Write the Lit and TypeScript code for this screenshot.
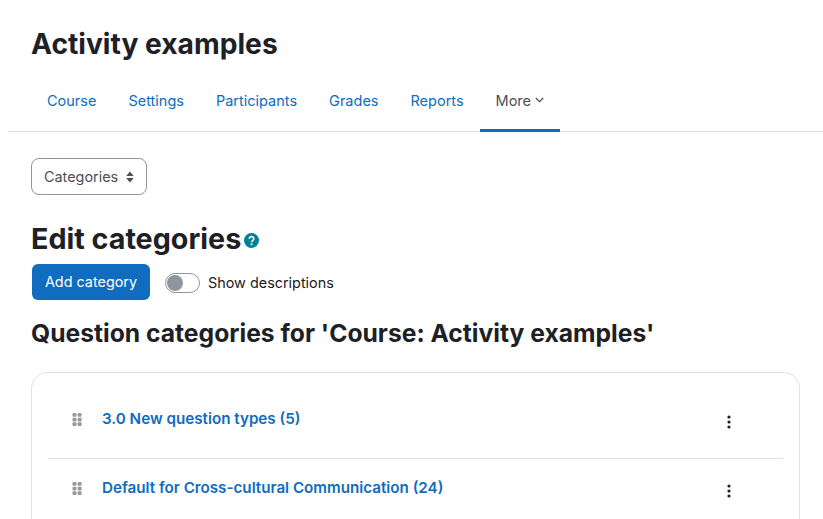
import { LitElement, html, css, svg } from "lit";
import { customElement } from "lit/decorators.js";

const tabs = ["Course", "Settings", "Participants", "Grades", "Reports"];
const rows = [
  { label: "3.0 New question types (5)", cls: "row first" },
  { label: "Default for Cross-cultural Communication (24)", cls: "row" },
];

const grip = svg`<svg class="grip" width="10" height="13" viewBox="0 0 10 13" fill="#999">
  <rect x="0.5" y="0" width="4" height="3.7" rx="1"/><rect x="5.6" y="0" width="4" height="3.7" rx="1"/>
  <rect x="0.5" y="4.7" width="4" height="3.7" rx="1"/><rect x="5.6" y="4.7" width="4" height="3.7" rx="1"/>
  <rect x="0.5" y="9.3" width="4" height="3.7" rx="1"/><rect x="5.6" y="9.3" width="4" height="3.7" rx="1"/>
</svg>`;

const kebab = svg`<svg class="kebab" width="4" height="14" viewBox="0 0 4 14" fill="#1d2125">
  <circle cx="2" cy="2" r="1.6"/><circle cx="2" cy="7" r="1.6"/><circle cx="2" cy="12" r="1.6"/>
</svg>`;

@customElement("app-root")
export class AppRoot extends LitElement {
  static styles = css`
    :host {
      display: block;
      width: 823px;
      height: 519px;
      overflow: hidden;
      background: #fff;
      color: #1d2125;
      font-family: Inter, "Liberation Sans", sans-serif;
      font-size: 14.4px;
    }
    .page { padding: 25px 23px 0 31px; }
    h1 {
      margin: 0;
      font-size: 28.2px;
      line-height: 38px;
      font-weight: 700;
    }
    nav {
      display: flex;
      margin: 7px -23px 0 -23px;
      height: 61px;
      border-bottom: 1px solid #dee2e6;
      padding-left: 23px;
      font-size: 14.5px;
    }
    nav a {
      display: flex;
      align-items: center;
      gap: 4px;
      height: 62px;
      box-sizing: border-box;
      padding: 1px 16px 0;
      color: #0f6cbf;
      border-bottom: 3px solid transparent;
    }
    nav a.active { color: #495057; border-bottom-color: #0f6cbf; }
    .select {
      display: inline-flex;
      align-items: center;
      gap: 8px;
      box-sizing: border-box;
      height: 37px;
      width: 116px;
      margin-top: 26px;
      padding: 0 12px;
      border: 1px solid #8f959e;
      border-radius: 8px;
      color: #495057;
    }
    .heading {
      display: flex;
      align-items: center;
      gap: 3px;
      margin-top: 25px;
      height: 38px;
    }
    h2 {
      margin: 0;
      font-size: 28.7px;
      line-height: 38px;
      font-weight: 700;
    }
    .help { margin-top: 2px; }
    .actions {
      display: flex;
      align-items: center;
      margin-top: 6px;
      margin-left: 1px;
    }
    .btn {
      display: flex;
      align-items: center;
      box-sizing: border-box;
      height: 36px;
      width: 118px;
      padding-bottom: 1px;
      justify-content: center;
      background: #0f6cbf;
      color: #fff;
      border-radius: 6px;
    }
    .toggle {
      box-sizing: border-box;
      width: 35px;
      height: 20px;
      margin: 2px 0 0 15px;
      border: 1px solid #8f959e;
      border-radius: 10px;
      padding: 1px;
    }
    .toggle span {
      display: block;
      width: 16px;
      height: 16px;
      border-radius: 50%;
      background: #8f959e;
    }
    .toggle-label { margin: 1px 0 0 8px; color: #1d2125; }
    h3 {
      margin: 19px 0 0;
      font-size: 24.66px;
      line-height: 28px;
      font-weight: 700;
    }
    .card {
      margin-top: 25px;
      height: 200px;
      box-sizing: border-box;
      width: 769px;
      padding: 0 16px;
      border: 1px solid #dee2e6;
      border-radius: 16px;
    }
    .row {
      display: flex;
      align-items: flex-start;
      box-sizing: border-box;
      height: 69px;
      padding: 0 52px 0 24px;
      border-bottom: 1px solid #dee2e6;
    }
    .row.first { height: 86px; padding-top: 17px; }
    .grip { flex: none; margin-top: 23px; }
    .kebab { flex: none; margin-top: 25px; }
    .row a {
      flex: 1;
      margin: 18px 0 0 20px;
      color: #0f6cbf;
      font-size: 15.2px;
      line-height: 22px;
      font-weight: 600;
    }
  `;

  render() {
    return html`
      <div class="page">
        <h1>Activity examples</h1>
        <nav>
          ${tabs.map((t) => html`<a>${t}</a>`)}
          <a class="active">More
            <svg width="9" height="6" viewBox="0 0 9 6" fill="none" stroke="#495057" stroke-width="1.2"><path d="M.8 1l3.7 3.7L8.2 1"/></svg>
          </a>
        </nav>
        <div class="select">
          <span>Categories</span>
          <svg width="8" height="12" viewBox="0 0 8 12" fill="#495057"><path d="M4 .5L7.8 5H.2zM4 11.5L.2 7h7.6z"/></svg>
        </div>
        <div class="heading">
          <h2>Edit categories</h2>
          <svg class="help" width="15" height="15" viewBox="0 0 15 15">
            <circle cx="7.5" cy="7.5" r="7.5" fill="#008196"/>
            <path d="M5.3 5.8a2.2 2.2 0 1 1 3.4 1.8c-.8.5-1.1.9-1.1 1.6" fill="none" stroke="#fff" stroke-width="1.7"/>
            <circle cx="7.6" cy="11.2" r="1" fill="#fff"/>
          </svg>
        </div>
        <div class="actions">
          <div class="btn">Add category</div>
          <div class="toggle"><span></span></div>
          <span class="toggle-label">Show descriptions</span>
        </div>
        <h3>Question categories for 'Course: Activity examples'</h3>
        <div class="card">
          ${rows.map((r) => html`<div class=${r.cls}>${grip}<a>${r.label}</a>${kebab}</div>`)}
        </div>
      </div>
    `;
  }
}
